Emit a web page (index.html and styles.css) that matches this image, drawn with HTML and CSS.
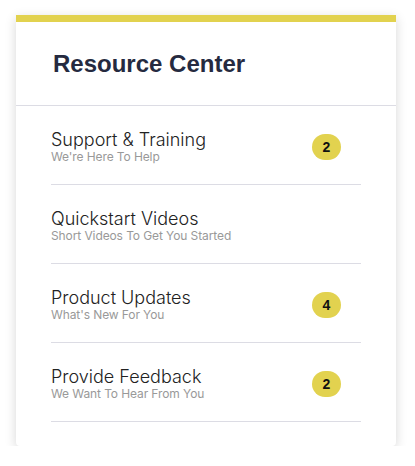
FILE: index.html
```html
<!DOCTYPE html>
<html>
<head>
<meta charset="utf-8">
<link rel="stylesheet" href="styles.css">
</head>
<body>
<div class="card">
  <div class="header"><h1 class="title">Resource Center</h1></div>
  <ul class="list">
    <li class="item">
      <div class="text"><div class="name">Support &amp; Training</div><div class="sub">We're Here To Help</div></div>
      <span class="badge">2</span>
    </li>
    <li class="item">
      <div class="text"><div class="name">Quickstart Videos</div><div class="sub">Short Videos To Get You Started</div></div>
    </li>
    <li class="item">
      <div class="text"><div class="name">Product Updates</div><div class="sub">What's New For You</div></div>
      <span class="badge">4</span>
    </li>
    <li class="item">
      <div class="text"><div class="name">Provide Feedback</div><div class="sub">We Want To Hear From You</div></div>
      <span class="badge">2</span>
    </li>
  </ul>
</div>
</body>
</html>
```
FILE: styles.css
```css
html, body { margin: 0; padding: 0; background: #fff; }
body { padding: 15px 0 0 16px; }
.card {
  width: 380px;
  background: #fff;
  border-top: 7px solid #e2d24f;
  border-radius: 0 0 4px 4px;
  box-shadow: 0 3px 12px rgba(0,0,0,0.16);
  padding-bottom: 24px;
}
.header {
  height: 83px;
  border-bottom: 1px solid #dcdce4;
  display: flex;
  align-items: center;
  padding-left: 37px;
}
.title {
  margin: 0;
  font-family: "Liberation Sans", Arial, sans-serif;
  font-weight: 700;
  font-size: 24px;
  color: #252a40;
}
.list { list-style: none; margin: 0; padding: 0 35px; }
.item {
  display: flex;
  align-items: center;
  padding: 24px 20px 20px 0;
  border-bottom: 1px solid #dcdce4;
}
.text { flex: 1; }
.name {
  font-family: Inter, sans-serif;
  font-size: 18px;
  font-weight: 300;
  line-height: 20px;
  color: #222;
}
.sub {
  font-family: Inter, sans-serif;
  font-size: 12px;
  line-height: 14px;
  letter-spacing: -0.1px;
  color: #999;
}
.badge {
  width: 29px; height: 26px;
  border-radius: 13px;
  background: #e2d24f;
  display: flex; align-items: center; justify-content: center;
  font-family: "Liberation Sans", Arial, sans-serif;
  font-weight: 700;
  font-size: 14px;
  color: #111;
}
```
